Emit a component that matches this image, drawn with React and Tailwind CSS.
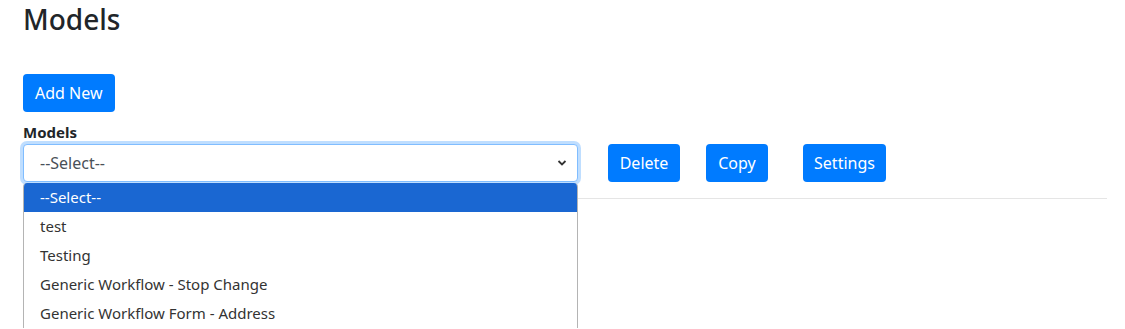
import React from 'react';

const options = ['--Select--', 'test', 'Testing', 'Generic Workflow - Stop Change', 'Generic Workflow Form - Address'];

export default function App() {
  return (
    <div className="min-h-[329px] w-full bg-white text-[#212529] overflow-hidden" style={{ fontFamily: '"Noto Sans", "Segoe UI", sans-serif' }}>
      <div className="pl-[23px] pr-[18px]">
        <h2 className="text-[28px] font-medium leading-[38px] m-0">Models</h2>

        <button className="mt-[36px] h-[38px] px-[12px] rounded-[4px] bg-[#007bff] text-white text-[16px]">Add New</button>

        <div className="relative">
          <label className="block mt-[10px] text-[15px] font-bold leading-[20px]">Models</label>

          <div className="flex items-center mt-[2px]">
            <div className="relative w-[555px] h-[38px] rounded-[4px] border border-[#80bdff] shadow-[0_0_0_3px_rgba(0,123,255,0.25)] bg-white flex items-center justify-between pl-[16px] pr-[10px] text-[16px] text-[#495057]">
              <span>--Select--</span>
              <svg width="10" height="8" viewBox="0 0 10 8" fill="none">
                <path d="M1.5 2 L5 5.5 L8.5 2" stroke="#333" strokeWidth="1.8" />
              </svg>
            </div>
            <button className="ml-[30px] h-[38px] w-[72px] rounded-[4px] bg-[#007bff] text-white text-[16px]">Delete</button>
            <button className="ml-[26px] h-[38px] w-[62px] rounded-[4px] bg-[#007bff] text-white text-[16px]">Copy</button>
            <button className="ml-[35px] h-[38px] w-[83px] rounded-[4px] bg-[#007bff] text-white text-[16px]">Settings</button>
          </div>

          <hr className="mt-[16px] border-t border-[#e5e5e5]" />

          <ul className="absolute left-0 top-[61px] w-[555px] bg-white border-x border-[#b4b4b4] rounded-t-[4px] overflow-hidden text-[15px] text-[#333]">
            {options.map((o, i) => (
              <li key={i} className={`h-[29px] flex items-center pl-[16px] ${i === 0 ? 'bg-[#1a67d2] text-white' : ''}`}>{o}</li>
            ))}
          </ul>
        </div>
      </div>
    </div>
  );
}
